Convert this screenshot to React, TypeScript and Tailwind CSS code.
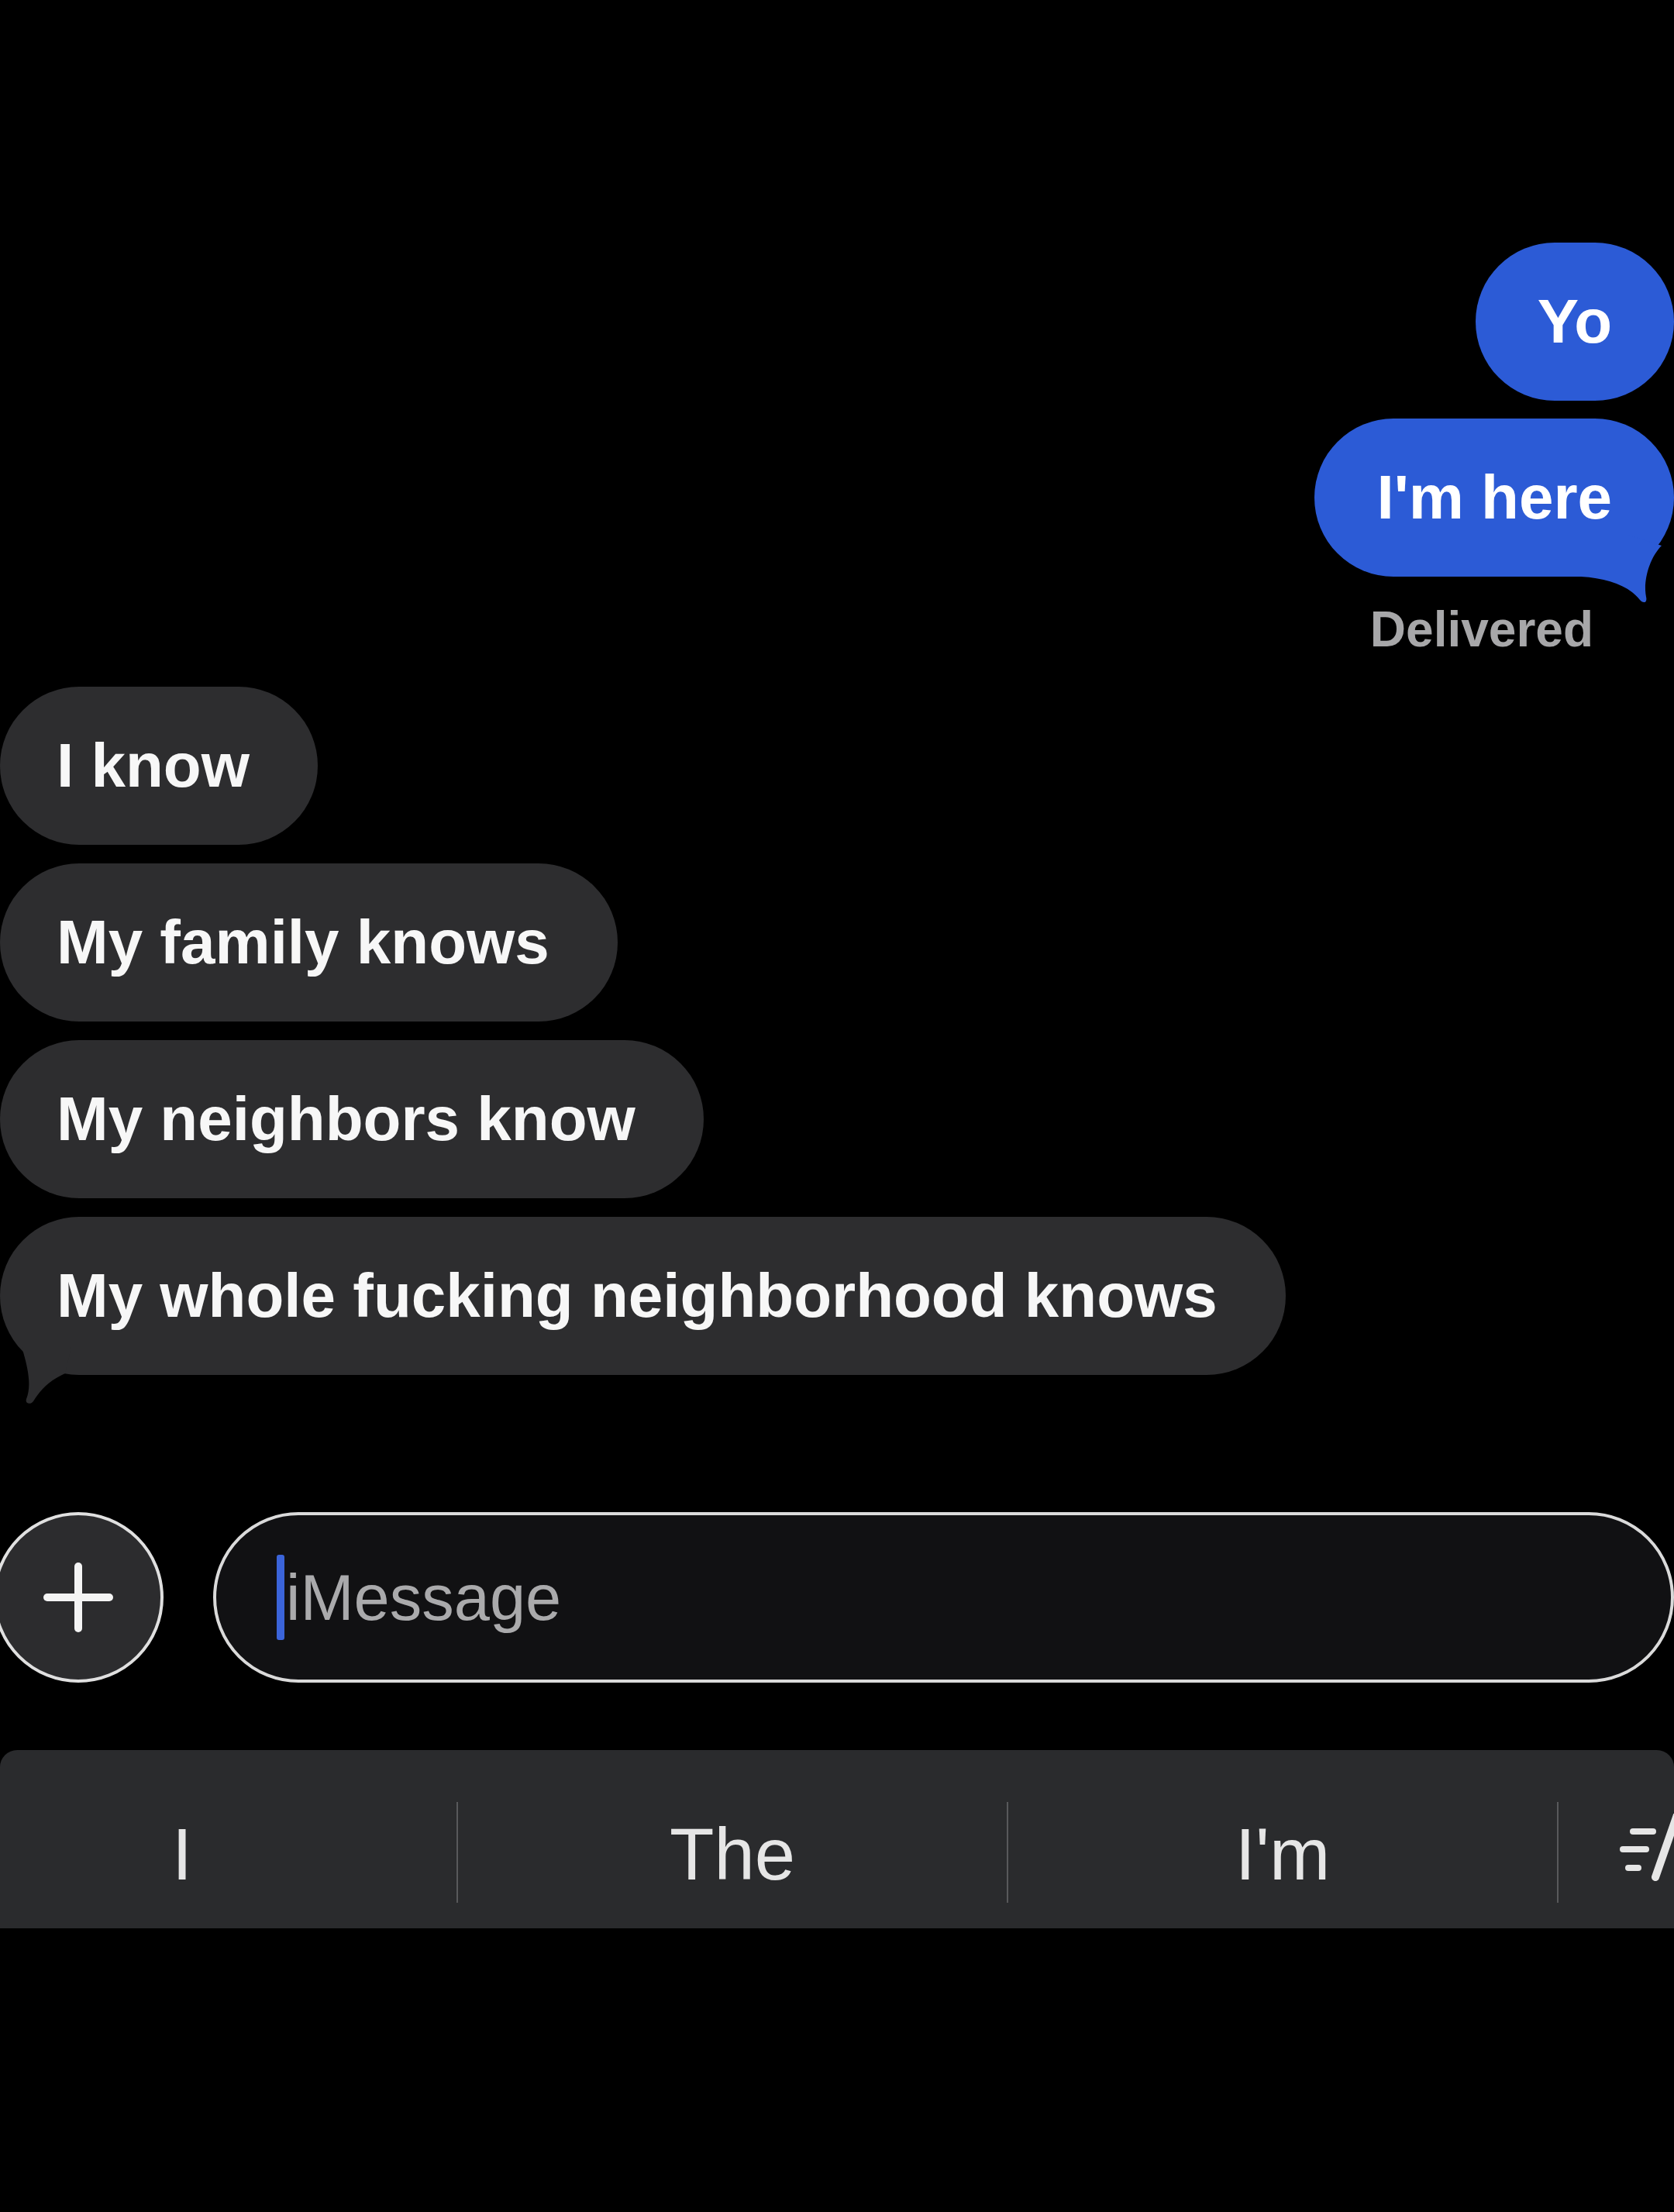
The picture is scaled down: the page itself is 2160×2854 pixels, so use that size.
import React from "react";

const sentMessages = ["Yo", "I'm here"];
const receivedMessages = ["I know", "My family knows", "My neighbors know", "My whole fucking neighborhood knows"];
const suggestions = ["I", "The", "I'm"];

const SentTail = () => (
    <svg className="absolute right-0 bottom-[-46px]" width="120" height="100" viewBox="0 0 120 100">
        <path
            d="M 0 54 C 35 56, 62 66, 76 84 C 80 89, 86 88, 84 80 C 80 60, 88 30, 104 14 L 60 0 L 0 0 Z"
            fill="#2c5bd6"
        />
    </svg>
);

const ReceivedTail = () => (
    <svg className="absolute left-0 bottom-[-40px]" width="100" height="80" viewBox="0 0 100 80">
        <path
            d="M 28 4 C 38 36, 40 56, 34 71 C 32 77, 39 79, 43 74 C 52 60, 62 48, 84 38 L 92 4 Z"
            fill="#2d2d2f"
        />
    </svg>
);

const SentBubble = ({ text, tail }: { text: string; tail?: boolean }) => (
    <div className="flex justify-end">
        <div className="relative h-[204px] rounded-full bg-[#2c5bd6] px-[80px] flex items-center">
            <span className="relative text-[80px] leading-none font-bold text-white">{text}</span>
            {tail && <SentTail />}
        </div>
    </div>
);

const ReceivedBubble = ({ text, tail }: { text: string; tail?: boolean }) => (
    <div className="flex">
        <div className="relative h-[204px] rounded-full bg-[#2d2d2f] pl-[73px] pr-[88px] flex items-center">
            <span className="relative text-[80px] leading-none font-bold text-[#f7f7f7] whitespace-nowrap">{text}</span>
            {tail && <ReceivedTail />}
        </div>
    </div>
);

const WritingToolsIcon = () => (
    <svg width="90" height="100" viewBox="0 0 90 100" className="ml-[69px] shrink-0">
        <g stroke="#e6e6e6" strokeWidth="8" strokeLinecap="round" fill="none">
            <line x1="27" y1="23" x2="53" y2="23" />
            <line x1="14" y1="46" x2="44" y2="46" />
            <line x1="21" y1="70" x2="34" y2="70" />
            <line x1="56" y1="82" x2="86" y2="-4" strokeWidth="10" />
        </g>
    </svg>
);

export default function App() {
    return (
        <div className="w-[2160px] min-h-[2854px] bg-black overflow-hidden font-['Liberation_Sans',Arial,sans-serif]">
            <div className="pt-[313px] flex flex-col">
                <SentBubble text={sentMessages[0]} />
                <div className="mt-[23px]">
                    <SentBubble text={sentMessages[1]} tail />
                </div>
                <div className="mt-[36px] flex justify-end pr-[104px]">
                    <span className="text-[64px] leading-none font-bold text-[#a7a7a9]">Delivered</span>
                </div>

                <div className="mt-[42px] flex flex-col gap-[24px]">
                    {receivedMessages.map((msg, i) => (
                        <ReceivedBubble key={i} text={msg} tail={i === receivedMessages.length - 1} />
                    ))}
                </div>

                {/* input row */}
                <div className="mt-[177px] flex items-center h-[220px]">
                    <div className="-ml-[9px] w-[220px] h-[220px] shrink-0 rounded-full border-[4px] border-[#e0e0e0] bg-[#2c2c2e] flex items-center justify-center">
                        <svg width="90" height="90" viewBox="0 0 90 90">
                            <g stroke="#f4f4f4" strokeWidth="10" strokeLinecap="round">
                                <line x1="45" y1="5" x2="45" y2="85" />
                                <line x1="5" y1="45" x2="85" y2="45" />
                            </g>
                        </svg>
                    </div>
                    <div className="ml-[64px] w-[1885px] h-[220px] shrink-0 rounded-full border-[4px] border-[#dadada] bg-[#111113] flex items-center pl-[78px]">
                        <div className="w-[10px] h-[110px] rounded-[3px] bg-[#3b64d9]" />
                        <span className="ml-[2px] text-[83px] leading-none text-[#aaaaac]">iMessage</span>
                    </div>
                </div>

                {/* suggestion bar */}
                <div className="mt-[87px] h-[230px] rounded-t-[22px] bg-[#2a2b2d] pt-[67px]">
                    <div className="flex h-[130px] -ml-[119px]">
                        {suggestions.map((word) => (
                            <React.Fragment key={word}>
                                <div className="w-[708px] shrink-0 flex items-center justify-center">
                                    <span className="text-[94px] leading-none text-[#e6e6e6] mt-[6px]">{word}</span>
                                </div>
                                <div className="w-[2px] shrink-0 bg-[#58595b]" />
                            </React.Fragment>
                        ))}
                        <div className="flex items-center">
                            <WritingToolsIcon />
                        </div>
                    </div>
                </div>
            </div>
        </div>
    );
}
